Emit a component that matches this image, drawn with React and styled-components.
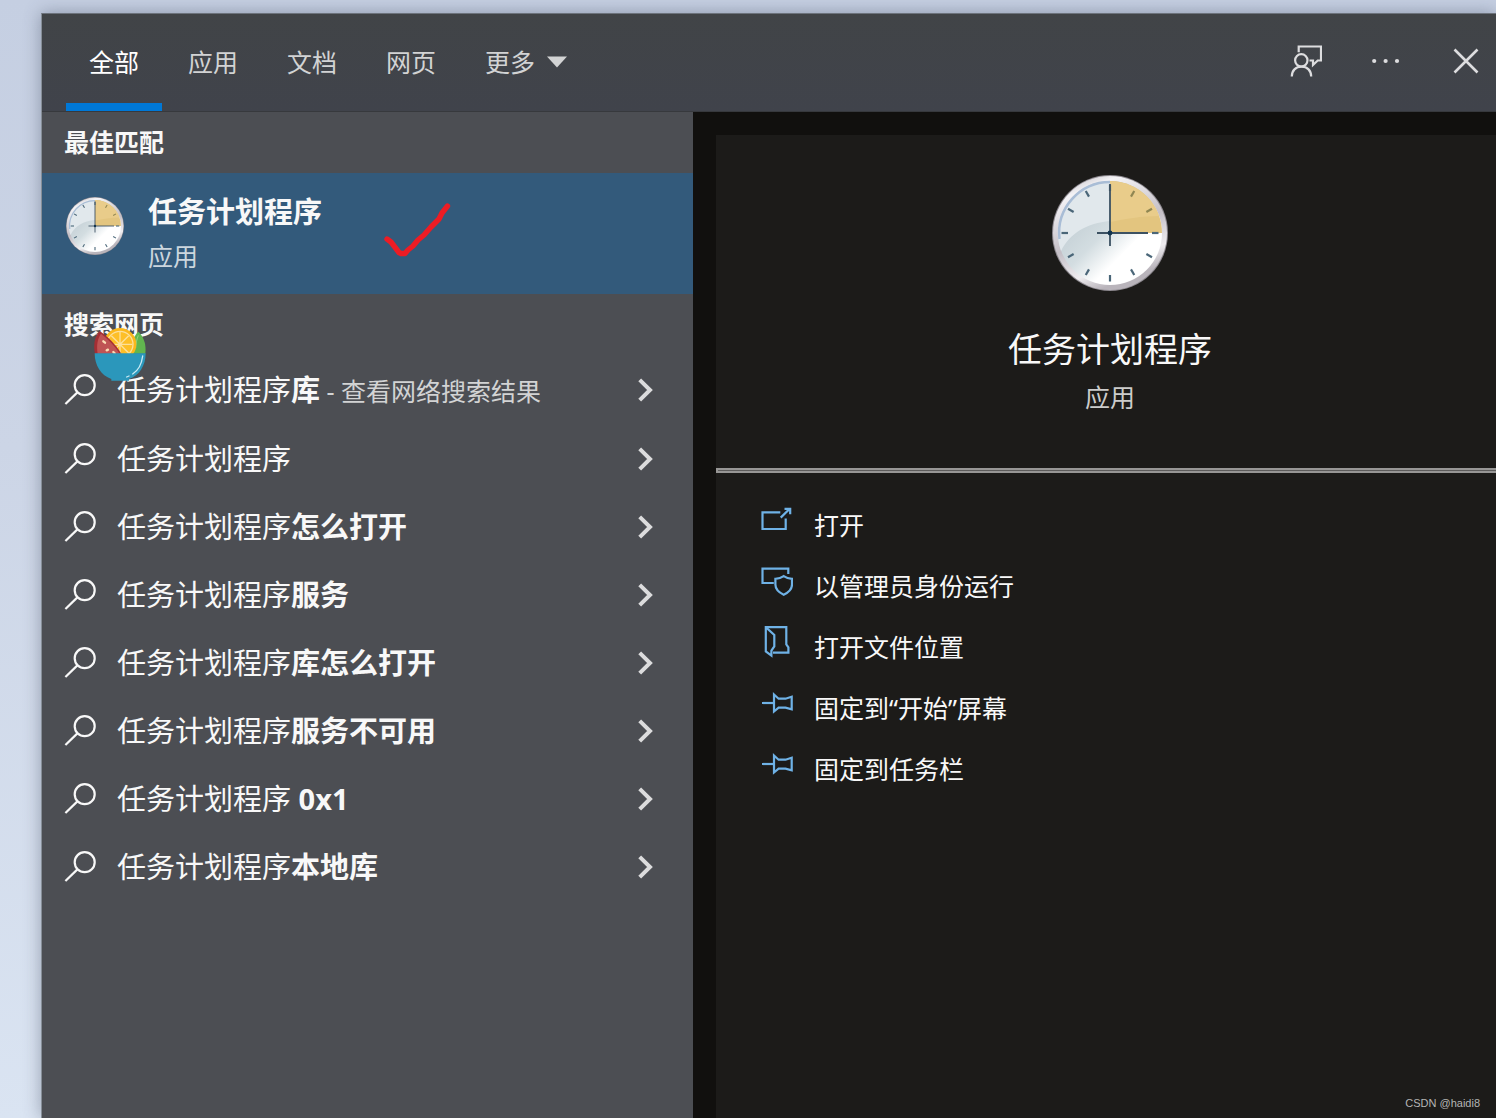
import React from "react";
import styled, { createGlobalStyle } from "styled-components";

const suggestions = [
  { base: "任务计划程序", bold: "库", note: " - 查看网络搜索结果" },
  { base: "任务计划程序" },
  { base: "任务计划程序", bold: "怎么打开" },
  { base: "任务计划程序", bold: "服务" },
  { base: "任务计划程序", bold: "库怎么打开" },
  { base: "任务计划程序", bold: "服务不可用" },
  { base: "任务计划程序 ", bold: "0x1" },
  { base: "任务计划程序", bold: "本地库" },
];

const actions = [
  { label: "打开", icon: OpenIcon },
  { label: "以管理员身份运行", icon: ShieldIcon },
  { label: "打开文件位置", icon: FolderIcon },
  { label: "固定到“开始”屏幕", icon: PinIcon },
  { label: "固定到任务栏", icon: PinIcon },
];

function App() {
  return (
    <Desktop lang="zh-CN">
      <GlobalStyle />
      <SearchWindow>
        <Header>
          <Tabs>
            <Tab $active>全部</Tab>
            <Tab>应用</Tab>
            <Tab>文档</Tab>
            <Tab>网页</Tab>
            <Tab>
              更多
              <svg width="20" height="12" viewBox="0 0 20 12">
                <path d="M0 0.5H20L10 11.5Z" fill="currentColor" />
              </svg>
            </Tab>
          </Tabs>
          <HeaderTools>
            <ToolButton aria-label="反馈">
              <FeedbackIcon />
            </ToolButton>
            <ToolButton aria-label="选项">
              <DotsIcon />
            </ToolButton>
            <ToolButton aria-label="关闭">
              <CloseIcon />
            </ToolButton>
          </HeaderTools>
        </Header>
        <Body>
          <ResultPane>
            <SectionTitle>最佳匹配</SectionTitle>
            <BestMatch>
              <ClockIcon id="small" size={60} />
              <BestMatchText>
                <strong>任务计划程序</strong>
                <span>应用</span>
              </BestMatchText>
              <CheckMark />
            </BestMatch>
            <SectionTitle>
              搜索网页
              <FruitBowl />
            </SectionTitle>
            <SuggestionList>
              {suggestions.map((item, index) => (
                <li key={index}>
                  <Suggestion>
                    <SearchIcon />
                    <SuggestionText>
                      {item.base}
                      {item.bold && <b>{item.bold}</b>}
                      {item.note && <small>{item.note}</small>}
                    </SuggestionText>
                    <ChevronIcon />
                  </Suggestion>
                </li>
              ))}
            </SuggestionList>
          </ResultPane>
          <DetailPane>
            <DetailCard>
              <AppSummary>
                <ClockIcon id="large" size={120} />
                <h1>任务计划程序</h1>
                <p>应用</p>
              </AppSummary>
              <Divider />
              <ActionList>
                {actions.map(({ label, icon: Icon }) => (
                  <li key={label}>
                    <ActionButton>
                      <Icon />
                      <span>{label}</span>
                    </ActionButton>
                  </li>
                ))}
              </ActionList>
            </DetailCard>
          </DetailPane>
        </Body>
      </SearchWindow>
      <Watermark>CSDN @haidi8</Watermark>
    </Desktop>
  );
}

export default App;

//아이콘

function FeedbackIcon() {
  return (
    <LineIcon viewBox="0 0 32 32">
      <path d="M8.7 7.3V1.5H31V15.5H27.7L23 20V15.5H19.5" />
      <circle cx="11.3" cy="15.3" r="6.2" />
      <path d="M1.8 31.5C1.8 25.5 5.7 21.7 11.5 21.7S21.2 25.5 21.2 31.5" />
    </LineIcon>
  );
}

function DotsIcon() {
  return (
    <svg width="32" height="32" viewBox="0 0 32 32" fill="currentColor">
      <circle cx="4.2" cy="16" r="2.1" />
      <circle cx="15.6" cy="16" r="2.1" />
      <circle cx="27" cy="16" r="2.1" />
    </svg>
  );
}

function CloseIcon() {
  return (
    <LineIcon viewBox="0 0 32 32" $weight={2.6}>
      <path d="M4.5 4.5L27.5 27.5M27.5 4.5L4.5 27.5" />
    </LineIcon>
  );
}

function SearchIcon() {
  return (
    <LineIcon viewBox="0 0 32 32">
      <circle cx="20.7" cy="11.2" r="10" />
      <path d="M13.4 18.4L1.4 30" />
    </LineIcon>
  );
}

function ChevronIcon() {
  return (
    <svg
      width="20"
      height="28"
      viewBox="0 0 20 28"
      fill="none"
      stroke="#dcdcdd"
      strokeWidth="4"
    >
      <path d="M3.7 3.8L14 14L3.7 24.2" />
    </svg>
  );
}

function OpenIcon() {
  return (
    <LineIcon viewBox="0 0 32 32">
      <path d="M19.3 8.3H1.5V25H24.7V14.5" />
      <path d="M19.7 13.6L28.5 5M23.5 4.9H29.2V10.2" />
    </LineIcon>
  );
}

function ShieldIcon() {
  return (
    <LineIcon viewBox="0 0 32 32">
      <path d="M27.3 9V3.7H1.5V18H12.8" />
      <path d="M22.7 11.2C20.3 12.9 17.5 13.7 14.4 13.8V19.5C14.4 24 18 27.5 22.7 29.7C27.4 27.5 31 24 31 19.5V13.8C27.9 13.7 25.1 12.9 22.7 11.2Z" />
    </LineIcon>
  );
}

function FolderIcon() {
  return (
    <LineIcon viewBox="0 0 32 32">
      <path d="M4.8 1.2H25.3V18.5L27.4 21.3V26.6H12" />
      <path d="M4.8 1.2V25.4L10.4 29.6V24.7L13.3 20.5V8.9Z" />
    </LineIcon>
  );
}

function PinIcon() {
  return (
    <LineIcon viewBox="0 0 32 32">
      <path d="M1 16H12.8" />
      <path d="M13 7.5L17.6 11.7H24.5L30.7 9.8V22.4L24.5 20.6H17.6L13 24.5Z" />
    </LineIcon>
  );
}

function ClockIcon({ id, size }) {
  const ticks = [0, 30, 60, 90, 120, 150, 180, 210, 240, 270, 300, 330];
  return (
    <ClockSvg width={size} height={size} viewBox="0 0 120 120">
      <defs>
        <linearGradient id={`${id}-rim`} x1="0" y1="0" x2="0.4" y2="1">
          <stop offset="0" stopColor="#a9a5ab" />
          <stop offset="0.2" stopColor="#f4f3f6" />
          <stop offset="0.6" stopColor="#c4bfc6" />
          <stop offset="0.85" stopColor="#efedf0" />
          <stop offset="1" stopColor="#b9b4bb" />
        </linearGradient>
        <linearGradient id={`${id}-face`} x1="0.2" y1="0.3" x2="0.75" y2="0.85">
          <stop offset="0" stopColor="#c3cfd5" />
          <stop offset="0.4" stopColor="#d3dde1" />
          <stop offset="0.75" stopColor="#ffffff" />
        </linearGradient>
      </defs>
      <circle cx="60" cy="60" r="58" fill="#8d898f" />
      <circle cx="60" cy="60" r="57" fill={`url(#${id}-rim)`} />
      <circle cx="60" cy="60" r="52" fill={`url(#${id}-face)`} />
      <path
        d="M60 8A52 52 0 0 0 11 78C20 60 37 50 60 48Z"
        fill="#e1e8ec"
      />
      <path
        d="M9.5 66A51 51 0 0 1 60 9"
        fill="none"
        stroke="#a9bdd6"
        strokeWidth="2.5"
      />
      <path d="M60 8A52 52 0 0 1 112 60H60Z" fill="#e3c57f" />
      <path d="M60 8A52 52 0 0 1 109 43C92 43 75 46 60 49Z" fill="#e9cc8a" />
      {ticks.map((angle) => (
        <path
          key={angle}
          d="M60 11.5V18"
          stroke={angle === 30 || angle === 60 ? "#8f8652" : "#4a6678"}
          strokeWidth="2.2"
          transform={`rotate(${angle} 60 60)`}
        />
      ))}
      <path d="M60 11V73M47 60H98" stroke="#3c5162" strokeWidth="1.8" />
      <circle cx="60" cy="60" r="2.4" fill="#12344e" />
    </ClockSvg>
  );
}

function CheckMark() {
  return (
    <CheckSvg width="68" height="56" viewBox="0 0 68 56">
      <path
        d="M3 37L7 40L15 50.5L17 51.5H21L24 48L29 44L34 38L40 33L47 25L55 17L58 11L63.5 4"
        fill="none"
        stroke="#ed1c24"
        strokeWidth="5.4"
        strokeLinecap="round"
        strokeLinejoin="round"
      />
    </CheckSvg>
  );
}

function FruitBowl() {
  return (
    <BowlSvg width="52" height="53" viewBox="0 0 156 159">
      <path d="M133 11C150 28 157 48 154 77H112C112 45 118 25 133 11Z" fill="#61b54f" />
      <path d="M133 22C128 35 125 48 125 60" fill="none" stroke="#b4e08f" strokeWidth="2" />
      <circle cx="78" cy="49" r="49" fill="#fbb81b" />
      <circle cx="78" cy="49" r="41" fill="#fde09a" />
      <circle cx="78" cy="49" r="37" fill="#fdbf27" />
      <path
        d="M78 12V86M41 49H115M52 23L104 75M104 23L52 75"
        stroke="#fde09a"
        strokeWidth="4"
      />
      <path d="M17 9C2 25-3 50 3 77H82C65 50 42 26 17 9Z" fill="#a52e34" />
      <path d="M21 17C10 32 7 54 11 77H77C62 53 44 34 21 17Z" fill="#bf5454" />
      <path
        d="M28 40L33 44M38 67L42 65M58 72L62 76"
        stroke="#fbdcb4"
        strokeWidth="7"
        strokeLinecap="round"
      />
      <path d="M2 76H155C155 112 136 144 105 153V158H52V153C21 143 2 112 2 76Z" fill="#2b97bb" />
      <path
        d="M146 84C143 108 133 127 116 138M105 144L98 147"
        fill="none"
        stroke="#c9ebf5"
        strokeWidth="4"
        strokeLinecap="round"
      />
    </BowlSvg>
  );
}

const GlobalStyle = createGlobalStyle`
  * {
    box-sizing: border-box;
  }
  body {
    margin: 0;
    font-family: "Noto Sans", "Noto Sans CJK SC", sans-serif;
    color: #f8f8f8;
  }
  button {
    font: inherit;
    color: inherit;
    background: none;
    border: none;
    padding: 0;
    cursor: pointer;
  }
  ul {
    list-style: none;
    margin: 0;
    padding: 0;
  }
`;

const Desktop = styled.div`
  position: relative;
  display: flex;
  min-height: 100vh;
  padding: 13px 0 0 41px;
  background: linear-gradient(#c5cfe2, #ccd5e6 40%, #dae4f2);
  overflow: hidden;
`;

const SearchWindow = styled.main`
  flex: 1;
  display: flex;
  flex-direction: column;
  border-top: 1px solid #6d737c;
  border-left: 1px solid #868e97;
  box-shadow: 0 0 16px rgba(70, 80, 100, 0.45);
`;

const Header = styled.header`
  display: flex;
  justify-content: space-between;
  height: 98px;
  padding: 0 14px 0 24px;
  background: linear-gradient(#414447, #40434b);
  border-bottom: 1px solid #37393d;
`;

const Tabs = styled.nav`
  display: flex;
  gap: 3px;
`;

const Tab = styled.button`
  display: flex;
  align-items: center;
  gap: 12px;
  padding: 0 23px;
  font-size: 25px;
  line-height: 36px;
  color: ${(props) => (props.$active ? "#ffffff" : "#d2d3d4")};
  border-top: 6px solid transparent;
  border-bottom: 8px solid ${(props) => (props.$active ? "#0078d7" : "transparent")};
`;

const HeaderTools = styled.div`
  display: flex;
  align-items: center;
  gap: 48px;
  padding-bottom: 3px;
  color: #dddddf;
`;

const ToolButton = styled.button`
  display: flex;
`;

const LineIcon = styled.svg`
  flex: none;
  width: 32px;
  height: 32px;
  fill: none;
  stroke: currentColor;
  stroke-width: ${(props) => props.$weight || 2.2};
`;

const ClockSvg = styled.svg`
  flex: none;
  display: block;
`;

const Body = styled.div`
  flex: 1;
  display: grid;
  grid-template-columns: minmax(0, 651fr) minmax(0, 803fr);
`;

const ResultPane = styled.section`
  background-color: #4c4e53;
`;

const SectionTitle = styled.h2`
  position: relative;
  margin: 0;
  padding: 0 22px;
  font-weight: 700;
  font-size: 25px;
  line-height: 61px;
`;

const BestMatch = styled.button`
  position: relative;
  display: flex;
  align-items: flex-start;
  gap: 23px;
  width: 100%;
  height: 121px;
  padding: 23px;
  text-align: left;
  background-color: #335a7b;
`;

const BestMatchText = styled.div`
  display: flex;
  flex-direction: column;
  gap: 8px;
  strong {
    font-weight: 700;
    font-size: 29px;
    line-height: 32px;
  }
  span {
    font-size: 25px;
    line-height: 40px;
    color: #ccd6de;
  }
`;

const CheckSvg = styled.svg`
  position: absolute;
  top: 29px;
  left: 342px;
`;

const BowlSvg = styled.svg`
  position: absolute;
  top: 34px;
  left: 52px;
  z-index: 1;
`;

const SuggestionList = styled.ul`
  li:first-child button {
    height: 70px;
  }
`;

const Suggestion = styled.button`
  display: flex;
  align-items: center;
  width: 100%;
  height: 68px;
  padding: 0 37px 0 22px;
  text-align: left;
`;

const SuggestionText = styled.span`
  flex: 1;
  padding-left: 21px;
  font-size: 29px;
  line-height: 40px;
  white-space: pre;
  b {
    font-weight: 700;
  }
  small {
    font-size: 25px;
    color: #d2d3d4;
  }
`;

const DetailPane = styled.section`
  display: flex;
  padding: 23px 0 0 23px;
  background-color: #11100e;
`;

const DetailCard = styled.div`
  flex: 1;
  background-color: #1c1b19;
`;

const AppSummary = styled.div`
  display: flex;
  flex-direction: column;
  align-items: center;
  height: 333px;
  padding: 38px 0 0 8px;
  h1 {
    margin: 32px 0 0;
    font-weight: 400;
    font-size: 34px;
    line-height: 48px;
  }
  p {
    margin: 6px 0 0;
    font-size: 25px;
    line-height: 36px;
    color: #cccccb;
  }
`;

const Divider = styled.hr`
  height: 5px;
  margin: 0;
  border: 2px solid #979695;
  border-right: none;
  background-color: #5c5b5a;
`;

const ActionList = styled.ul`
  padding: 21px 0 0 45px;
`;

const ActionButton = styled.button`
  display: flex;
  align-items: center;
  gap: 21px;
  width: 100%;
  height: 61px;
  text-align: left;
  font-size: 25px;
  line-height: 36px;
  svg {
    color: #6fb2e6;
    margin-bottom: 10px;
  }
`;

const Watermark = styled.span`
  position: absolute;
  right: 16px;
  bottom: 7px;
  font-family: "Liberation Sans", sans-serif;
  font-size: 11px;
  line-height: 16px;
  color: #b5b5b4;
`;
